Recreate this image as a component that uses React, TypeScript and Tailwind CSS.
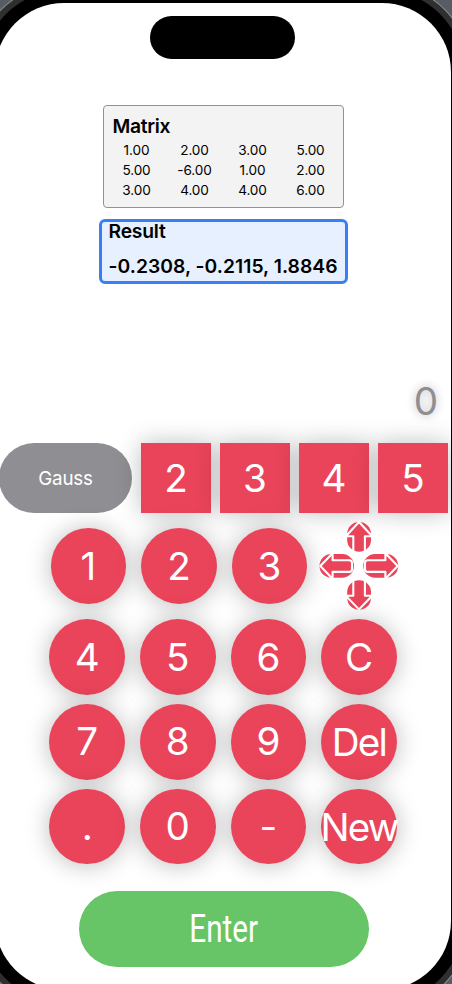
const matrix = [
  ['1.00', '2.00', '3.00', '5.00'],
  ['5.00', '-6.00', '1.00', '2.00'],
  ['3.00', '4.00', '4.00', '6.00'],
];

const keyRows = [
  ['4', '5', '6', 'C'],
  ['7', '8', '9', 'Del'],
  ['.', '0', '-', 'New'],
];

function Key({ label }: { label: string }) {
  return (
    <button className="flex size-[75.6px] shrink-0 items-center justify-center rounded-full bg-[#ea445a] text-[38.6px] leading-none font-normal whitespace-nowrap text-white shadow-[0_1px_24px_rgba(0,0,0,0.27)]">
      <span className={label.length > 1 ? 'translate-y-[0.5px] tracking-[-1.8px]' : ''}>{label}</span>
    </button>
  );
}

function DirectionPad() {
  return (
    <svg className="-mt-[8.5px] h-[90px] w-[80px] shrink-0" viewBox="0 0 80 90" fill="none">
      <g fill="#ea445a">
        <rect x="28.2" y="2" width="23.8" height="29.8" rx="11.9" />
        <rect x="28.2" y="60.2" width="23.8" height="29.6" rx="11.9" />
        <rect x="0.5" y="34" width="34.5" height="23.8" rx="11.9" />
        <rect x="44.3" y="34" width="34.9" height="23.8" rx="11.9" />
      </g>
      <g stroke="#fff" strokeWidth="2.1" strokeLinejoin="round">
        <path d="M34.3 32 V16.2 H26.8 L40 2 L53.2 16.2 H45.9 V32" />
        <path d="M34.3 60 V75.8 H26.8 L40 89.4 L53.2 75.8 H45.9 V60" />
        <path d="M1.3 46 L13.6 33.2 V40.2 H30.3 Q33 40.2 33 42.9 V49.2 Q33 51.9 30.3 51.9 H13.6 V58.8 Z" />
        <path d="M78.7 46 L66.4 33.2 V40.2 H48.7 Q46 40.2 46 42.9 V49.2 Q46 51.9 48.7 51.9 H66.4 V58.8 Z" />
      </g>
    </svg>
  );
}

export default function App() {
  return (
    <div className="h-[984px] w-[452px] overflow-hidden bg-[#575c65] font-['Inter','Liberation_Sans',sans-serif] text-black">
      <main className="mt-[3px] -ml-[5px] flex h-[987px] w-[456px] flex-col rounded-[69px] bg-white pl-[5px] shadow-[0_0_0_13px_#000,0_0_0_19px_#2f2f2f,0_0_0_20px_#8d8d8f]">
        <div className="mt-[13px] ml-[150px] h-[42.5px] w-[145px] rounded-full bg-black" />

        <section className="mt-[46.5px] ml-[103px] h-[102.5px] w-[241px] rounded-[4px] border border-[#929292] bg-[#f3f3f3] pt-[9px]">
          <h2 className="-mt-px mb-[2px] pl-[8.5px] text-[19.3px] leading-6 font-semibold tracking-[-0.3px]">Matrix</h2>
          <div className="ml-[3.5px] grid w-[232px] grid-cols-4 text-center text-[13.6px] leading-5 tracking-[-0.1px]">
            {matrix.flat().map((value, i) => (
              <span key={i}>{value}</span>
            ))}
          </div>
        </section>

        <section className="mt-[11.5px] ml-[99px] h-[64.5px] w-[249px] rounded-[6px] border-[3px] border-[#3a7ef6] bg-[#e6f0fe] pl-[6.5px] font-semibold whitespace-nowrap">
          <h2 className="-mt-[3px] text-[19.3px] leading-6 tracking-[-0.2px]">Result</h2>
          <p className="mt-[11px] text-[19.3px] leading-6 tracking-[0.03px]">-0.2308, -0.2115, 1.8846</p>
        </section>

        <div className="mt-[93.5px] flex h-[48px] items-center justify-end pr-[13px] text-[38.6px] leading-none font-normal text-[#8e8e93] [text-shadow:0_0_10px_rgba(0,0,0,0.3)]">
          0
        </div>

        <div className="mt-[18.3px] -ml-px flex h-[69.7px] gap-[9px]">
          <button className="w-[133px] shrink-0 rounded-full bg-[#8e8e93] pt-px text-[18.8px] font-normal tracking-[-0.2px] text-white">
            Gauss
          </button>
          {['2', '3', '4', '5'].map((n) => (
            <button
              key={n}
              className="w-[70px] shrink-0 bg-[#ea445a] text-[38.6px] leading-none font-normal text-white shadow-[0_0_24px_rgba(0,0,0,0.26)]"
            >
              {n}
            </button>
          ))}
        </div>

        <div className="mt-[15.5px] ml-[50.5px] flex h-[75.6px] gap-[15px]">
          <Key label="1" />
          <Key label="2" />
          <Key label="3" />
          <div className="-ml-[3.3px]">
            <DirectionPad />
          </div>
        </div>

        <div className="mt-[15.2px] ml-[49.4px] grid w-fit grid-cols-4 gap-x-[15px] gap-y-[9.1px]">
          {keyRows.flat().map((label) => (
            <Key key={label} label={label} />
          ))}
        </div>

        <button className="mt-[27px] ml-[79px] flex h-[75.3px] w-[290px] shrink-0 items-center justify-center rounded-full bg-[#67c567] font-['Roboto',sans-serif] text-[39px] leading-none text-white">
          <span className="-translate-x-[0.5px] translate-y-px scale-x-[0.76]">Enter</span>
        </button>
      </main>
    </div>
  );
}
